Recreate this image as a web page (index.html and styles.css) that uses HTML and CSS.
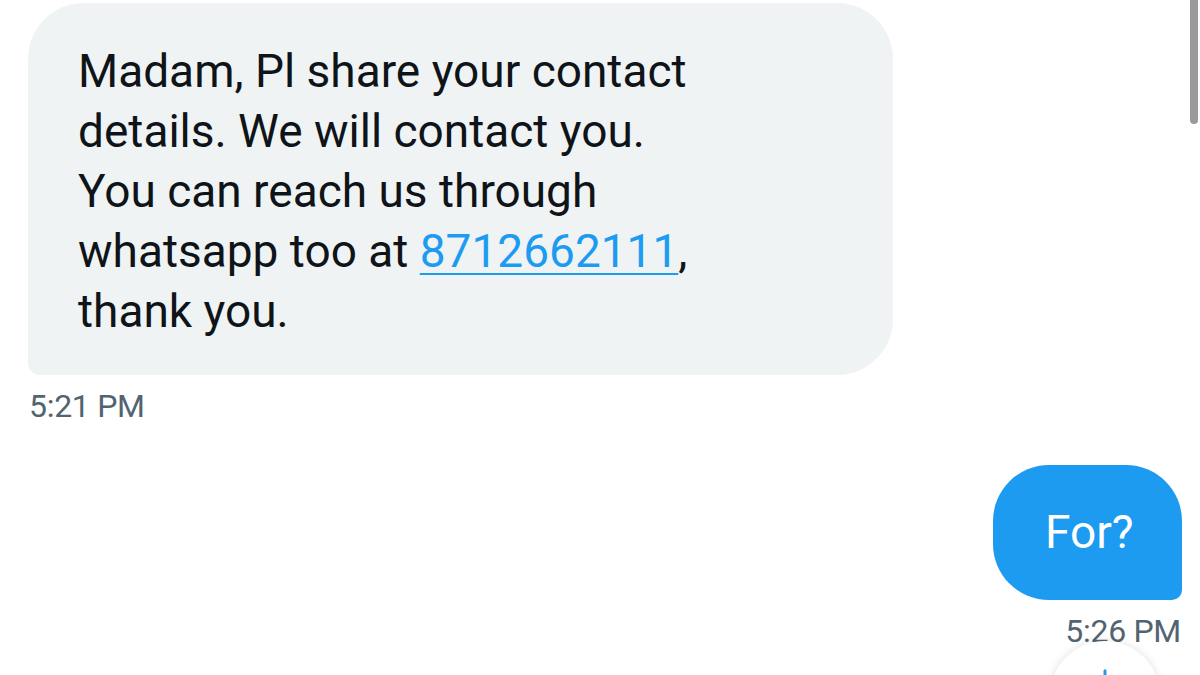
FILE: index.html
```html
<!DOCTYPE html>
<html lang="en">
<head>
    <meta charset="UTF-8">
    <meta name="viewport" content="width=device-width, initial-scale=1.0">
    <title>Messages</title>
    <link rel="stylesheet" href="styles.css">
</head>
<body>

    <div class="conversation">
        <div class="message received">
            <div class="bubble">
                Madam, Pl share your contact details. We will contact you. You can reach us through whatsapp too at <a href="#">8712662111</a>, thank you.
            </div>
            <div class="time">5:21 PM</div>
        </div>

        <div class="message sent">
            <div class="bubble">For?</div>
            <div class="time">5:26 PM</div>
        </div>
    </div>

    <div class="scroll-area">
        <button class="scroll-down" aria-label="Scroll to bottom">
            <svg width="30" height="30" viewBox="0 0 24 24"><path d="M12 3v16M5 12l7 7 7-7" fill="none" stroke="#1d9bf0" stroke-width="2.4" stroke-linecap="round" stroke-linejoin="round"/></svg>
        </button>
    </div>

    <div class="scrollbar"></div>

</body>
</html>
```

FILE: styles.css
```css
body {
    margin: 0;
    background-color: #ffffff;
    font-family: Roboto, "Liberation Sans", Arial, sans-serif;
    color: #0f1419;
    overflow: hidden;
    height: 675px;
    position: relative;
}

.conversation {
    display: flex;
    flex-direction: column;
    padding: 3px 18px 0 28px;
}

.message {
    display: flex;
    flex-direction: column;
}

.message.received {
    align-items: flex-start;
}

.message.sent {
    align-items: flex-end;
    margin-top: 40px;
}

.bubble {
    font-size: 46px;
    line-height: 60px;
    box-sizing: border-box;
}

.received .bubble {
    width: 865px;
    padding: 38px 170px 34px 50px;
    background-color: #eff3f4;
    border-radius: 56px 56px 56px 12px;
}

.received .bubble a {
    color: #1d9bf0;
    text-decoration: underline;
    text-decoration-thickness: 2px;
    text-underline-offset: 6px;
}

.sent .bubble {
    width: 189px;
    padding: 37px 20px 38px 52px;
    background-color: #1d9bf0;
    color: #ffffff;
    border-radius: 56px 56px 10px 56px;
}

.time {
    font-size: 32px;
    color: #536471;
    letter-spacing: -0.3px;
    margin-top: 12px;
}

.received .time {
    margin-left: 1px;
}

.sent .time {
    margin-top: 12px;
    margin-right: 1px;
}

/* bottom-right floating button, only its top shows in the frame */
.scroll-area {
    position: absolute;
    left: 1030px;
    top: 625px;
    width: 150px;
    height: 50px;
    overflow: hidden;
}

.scroll-down {
    margin: 16px 0 0 20px;
    width: 110px;
    height: 110px;
    border: none;
    border-radius: 50%;
    background-color: #ffffff;
    box-shadow: 0 0 10px rgba(0, 0, 0, 0.12);
    display: flex;
    justify-content: center;
    align-items: flex-start;
    padding-top: 26px;
}

.scrollbar {
    position: absolute;
    right: 2px;
    top: 0;
    width: 8px;
    height: 124px;
    background-color: #9a9a9a;
    border-radius: 0 0 4px 4px;
}
```
